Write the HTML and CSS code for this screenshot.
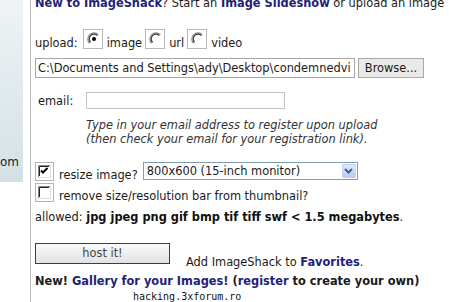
FILE: index.html
```html
<!doctype html>
<html lang="en">
<head>
    <meta charset="UTF-8" />
    <title>ImageShack upload</title>
    <link rel="stylesheet" href="styles.css">
</head>
<body>
    <div class="page">
        <div class="side">
            <div class="side-panel"><span class="side-text">om</span></div>
        </div>

        <div class="main">
            <p class="intro"><b class="link">New to ImageShack</b>? Start an <b class="link">Image Slideshow</b> or upload an image</p>

            <div class="row upload-row">
                <span class="label">upload:</span>
                <svg class="radio" width="20" height="20" viewBox="0 0 20 20">
                    <rect x="0.5" y="0.5" width="19" height="19" fill="#fff" stroke="#b8b8b8" />
                    <path d="M6.6 14.4 A6 6 0 0 1 15.4 5.6" fill="none" stroke="#8a8a8a" stroke-width="1.2" />
                    <path d="M7.6 13.4 A4.6 4.6 0 0 1 14.4 6.6" fill="none" stroke="#303030" stroke-width="1.2" />
                    <circle cx="11" cy="10" r="2" fill="#000" />
                </svg>
                <span class="label">image</span>
                <svg class="radio" width="20" height="20" viewBox="0 0 20 20">
                    <rect x="0.5" y="0.5" width="19" height="19" fill="#fff" stroke="#b8b8b8" />
                    <path d="M6.6 14.4 A6 6 0 0 1 15.4 5.6" fill="none" stroke="#8a8a8a" stroke-width="1.2" />
                    <path d="M7.6 13.4 A4.6 4.6 0 0 1 14.4 6.6" fill="none" stroke="#303030" stroke-width="1.2" />
                </svg>
                <span class="label">url</span>
                <svg class="radio" width="20" height="20" viewBox="0 0 20 20">
                    <rect x="0.5" y="0.5" width="19" height="19" fill="#fff" stroke="#b8b8b8" />
                    <path d="M6.6 14.4 A6 6 0 0 1 15.4 5.6" fill="none" stroke="#8a8a8a" stroke-width="1.2" />
                    <path d="M7.6 13.4 A4.6 4.6 0 0 1 14.4 6.6" fill="none" stroke="#303030" stroke-width="1.2" />
                </svg>
                <span class="label">video</span>
            </div>

            <div class="row file-row">
                <div class="file-box">C:\Documents and Settings\ady\Desktop\condemnedvi</div>
                <div class="browse-btn">Browse...</div>
            </div>

            <div class="row email-row">
                <span class="email-label">email:</span>
                <div class="email-box"></div>
            </div>

            <p class="note">Type in your email address to register upon upload<br>(then check your email for your registration link).</p>

            <div class="row check-row">
                <svg class="check" width="19" height="19" viewBox="0 0 19 19">
                    <rect x="0.5" y="0.5" width="18" height="18" fill="#fff" stroke="#b4b4b4" />
                    <path d="M3.5 15 V3.5 H15" fill="none" stroke="#888" />
                    <path d="M4.5 14 V4.5 H14" fill="none" stroke="#222" />
                    <path d="M15.5 3 V15.5 H3" fill="none" stroke="#ddd" />
                    <path d="M6 8.5 L8 10.5 L12.5 6" fill="none" stroke="#000" stroke-width="2" />
                </svg>
                <span class="label">resize image?</span>
                <div class="select">
                    <span class="select-text">800x600 (15-inch monitor)</span>
                    <span class="select-arrow">
                        <svg width="9" height="6" viewBox="0 0 9 6"><path d="M1 1 L4.5 4.5 L8 1" fill="none" stroke="#4a5f8a" stroke-width="2" /></svg>
                    </span>
                </div>
            </div>

            <div class="row check-row second">
                <svg class="check" width="19" height="19" viewBox="0 0 19 19">
                    <rect x="0.5" y="0.5" width="18" height="18" fill="#fff" stroke="#b4b4b4" />
                    <path d="M3.5 15 V3.5 H15" fill="none" stroke="#888" />
                    <path d="M4.5 14 V4.5 H14" fill="none" stroke="#222" />
                    <path d="M15.5 3 V15.5 H3" fill="none" stroke="#ddd" />
                </svg>
                <span class="label">remove size/resolution bar from thumbnail?</span>
            </div>

            <p class="allowed">allowed: <b>jpg jpeg png gif bmp tif tiff swf &lt; 1.5 megabytes</b>.</p>

            <div class="row host-row">
                <div class="host-btn">host it!</div>
                <span class="fav">Add ImageShack to <b class="link">Favorites</b>.</span>
            </div>

            <p class="gallery"><b>New! <span class="link">Gallery for your Images!</span> (<span class="link">register</span> to create your own)</b></p>
        </div>

        <div class="watermark">hacking.3xforum.ro</div>
    </div>
</body>
</html>
```

FILE: styles.css
```css
body {
    margin: 0;
    background-color: #ffffff;
    font-family: 'DejaVu Sans', Verdana, sans-serif;
    font-size: 11.4px;
    line-height: 14px;
    color: #1a1a1a;
    overflow: hidden;
}

.page {
    position: relative;
    display: flex;
    height: 302px;
    overflow: hidden;
}

.side {
    width: 30px;
    flex-shrink: 0;
    border-right: 1px solid #b9b9b9;
}

.side-panel {
    width: 23px;
    height: 182px;
    background: linear-gradient(#eff3f5, #d3e1e5);
    display: flex;
    align-items: flex-end;
    overflow: hidden;
}

.side-text {
    font-size: 12px;
    line-height: 14px;
    margin-bottom: 13px;
    color: #222;
}

.main {
    flex: 1;
    min-width: 0;
    padding-left: 4px;
}

p {
    margin: 0;
}

.link {
    color: #1f1f78;
}

.intro {
    margin-top: -4px;
    white-space: nowrap;
}

.row {
    display: flex;
}

.label {
    white-space: nowrap;
}

.upload-row {
    margin-top: 19px;
    height: 20px;
    align-items: flex-end;
}

.upload-row .label {
    margin-bottom: -1px;
}

.radio {
    display: block;
    margin: 0 4px 0 5px;
}

.radio + .label + .radio {
    margin-left: 3px;
}

.file-row {
    margin-top: 9px;
    height: 20px;
}

.file-box {
    width: 316px;
    height: 18px;
    padding-left: 2px;
    border: 1px solid #a7a7a7;
    line-height: 18px;
    white-space: nowrap;
    overflow: hidden;
}

.browse-btn {
    width: 64px;
    height: 18px;
    margin-left: 3px;
    border: 1px solid #a9a9a9;
    background-color: #e9e9e6;
    text-align: center;
    line-height: 18px;
}

.email-row {
    margin-top: 14px;
    align-items: center;
}

.email-label {
    width: 48px;
    padding-left: 3px;
}

.email-box {
    width: 197px;
    height: 15px;
    border: 1px solid #c4c4c4;
}

.note {
    margin-top: 9px;
    padding-left: 51px;
    font-style: italic;
    color: #333;
}

.check-row {
    margin-top: 16px;
    align-items: flex-end;
}

.check-row.second {
    margin-top: 2px;
}

.check {
    display: block;
    margin-right: 5px;
}

.check-row .label {
    margin-bottom: -1px;
}

.select {
    display: flex;
    align-items: center;
    width: 213px;
    height: 16px;
    margin: 0 0 1px 5px;
    border: 1px solid #7f9db9;
    align-self: flex-start;
}

.select-text {
    flex: 1;
    padding-left: 3px;
    white-space: nowrap;
}

.select-arrow {
    display: flex;
    align-items: center;
    justify-content: center;
    width: 14px;
    height: 14px;
    margin-right: 1px;
    background: linear-gradient(#dfe8fb, #b9cbf3);
    border: 1px solid #c6d4f2;
    box-sizing: border-box;
}

.allowed {
    margin-top: 8px;
}

.allowed b {
    color: #111;
}

.host-row {
    margin-top: 19px;
    align-items: flex-start;
}

.host-btn {
    width: 133px;
    height: 19px;
    border: 1px solid #3c3c3c;
    background: linear-gradient(#fafafa, #e2e2e2);
    color: #444;
    text-align: center;
    line-height: 19px;
}

.fav {
    margin-left: 16px;
    padding-top: 12px;
}

.gallery {
    margin-top: 5px;
    white-space: nowrap;
}

.watermark {
    position: absolute;
    left: 133px;
    top: 291px;
    font-family: 'DejaVu Sans Mono', monospace;
    font-size: 10px;
    line-height: 12px;
    color: #111;
}
```
